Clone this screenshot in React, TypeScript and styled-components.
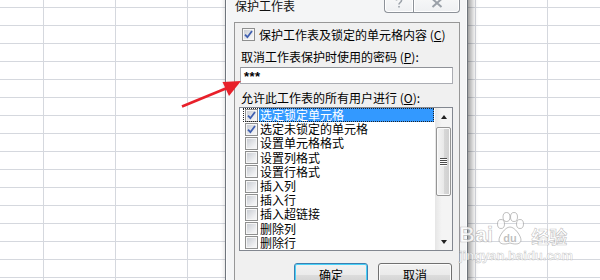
import React from 'react';
import styled, { createGlobalStyle } from 'styled-components';

const CJK = '"Noto Sans CJK SC", "Noto Sans", sans-serif';

const GlobalStyle = createGlobalStyle`
  html, body {
    margin: 0;
    padding: 0;
    overflow: hidden;
    background: #fff;
  }
  body {
    font-family: ${CJK};
  }
`;

const Sheet = styled.div`
  position: relative;
  width: 600px;
  height: 280px;
  overflow: hidden;
  box-sizing: border-box;
  display: flex;
  align-items: flex-start;
  padding-left: 225px;
  background-color: #fff;
  background-image:
    linear-gradient(to right, #d5d8de 1px, transparent 1px),
    linear-gradient(to bottom, #d5d8de 1px, transparent 1px);
  background-size: 72px 100%, 100% 18px;
  background-position: 43px 0, 0 7px;
`;

const Window = styled.div`
  width: 243px;
  height: 330px;
  margin-top: -10px;
  flex-shrink: 0;
  box-sizing: border-box;
  display: flex;
  flex-direction: column;
  padding: 0 7px 0 8px;
  border: 1px solid #6f757c;
  border-radius: 6px 6px 0 0;
  background: #f4f5f6;
  box-shadow: 3px 0 7px rgba(0, 0, 0, 0.45), inset 0 0 0 1px #fdfdfd;
`;

const TitleBar = styled.div`
  height: 31px;
  display: flex;
  align-items: flex-start;
`;

const Title = styled.div`
  margin: 8px 0 0 1px;
  font-size: 12px;
  line-height: 13px;
  color: #111;
`;

const Captions = styled.div`
  margin-left: auto;
  display: flex;
`;

const CaptionButton = styled.div<{ $w: number }>`
  width: ${(p) => p.$w}px;
  height: 22px;
  box-sizing: border-box;
  display: flex;
  align-items: flex-end;
  justify-content: center;
  padding-bottom: 4px;
  border: 1px solid #8d9299;
  border-top: none;
  background: linear-gradient(#fbfbfb, #eef0f2);
  box-shadow: inset 0 0 0 1px #fff;
  &:first-child {
    border-radius: 0 0 0 4px;
    border-right: none;
  }
  &:last-child {
    border-radius: 0 0 4px 0;
  }
`;

const Client = styled.div`
  flex: 1;
  display: flex;
  flex-direction: column;
  border: 1px solid #979797;
  background: #f0f0f0;
  font-size: 12px;
  line-height: 14px;
  color: #000;
`;

const CheckRow = styled.label`
  margin: 5px 0 0 7px;
  height: 13px;
  display: flex;
  align-items: center;
  gap: 4px;
  white-space: nowrap;
`;

const Box = styled.span`
  width: 13px;
  height: 13px;
  flex-shrink: 0;
  box-sizing: border-box;
  display: flex;
  align-items: center;
  justify-content: center;
  border: 1px solid #8e8f8f;
  background: linear-gradient(135deg, #c4c8cf, #eeeff1 70%, #fafafa);
  box-shadow: inset 0 0 0 1px #f6f6f6;
`;

const FieldLabel = styled.div<{ $top: number }>`
  margin: ${(p) => p.$top}px 0 0 6px;
  white-space: nowrap;
`;

const Password = styled.div`
  margin: 3px 0 0 5px;
  width: 213px;
  height: 17px;
  box-sizing: border-box;
  border: 1px solid #abadb3;
  border-top-color: #8f9298;
  background: #fff;
  padding-left: 3px;
  font-family: "Liberation Sans", Arial, sans-serif;
  font-size: 13px;
  font-weight: bold;
  line-height: 17px;
  letter-spacing: 0.5px;
`;

const ListBox = styled.div`
  margin: 2px 0 0 4px;
  width: 214px;
  height: 144px;
  box-sizing: border-box;
  border: 1px solid #828790;
  background: #fff;
  display: flex;
`;

const Items = styled.div`
  flex: 1;
  display: flex;
  flex-direction: column;
`;

const Item = styled.div<{ $focused?: boolean }>`
  position: relative;
  height: 14.2px;
  display: flex;
  align-items: center;
  padding-left: 5px;
  &::before {
    content: '';
    display: ${(p) => (p.$focused ? 'block' : 'none')};
    position: absolute;
    left: 3px;
    top: 0;
    right: 1px;
    bottom: 0;
    border: 1px dotted #222;
  }
`;

const ItemText = styled.span<{ $selected?: boolean }>`
  flex: 1;
  margin: 0 1px 0 1px;
  padding-left: 1px;
  height: 14px;
  line-height: 14px;
  white-space: nowrap;
  background: ${(p) => (p.$selected ? '#3399ff' : 'transparent')};
  color: ${(p) => (p.$selected ? '#fff' : '#000')};
`;

const ScrollBar = styled.div`
  width: 17px;
  display: flex;
  flex-direction: column;
  background: linear-gradient(to right, #e6e6e6, #f4f4f4 40%, #f4f4f4);
`;

const Arrow = styled.div<{ $down?: boolean }>`
  height: 17px;
  display: flex;
  align-items: center;
  justify-content: center;
  &::after {
    content: '';
    width: 0;
    height: 0;
    border-left: 3.5px solid transparent;
    border-right: 3.5px solid transparent;
    ${(p) =>
      p.$down ? 'border-top: 4px solid #222;' : 'border-bottom: 4px solid #222;'}
  }
`;

const Thumb = styled.div`
  margin: 2px 1px 0 1px;
  height: 69px;
  box-sizing: border-box;
  border: 1px solid #959595;
  border-radius: 2px;
  background: linear-gradient(to right, #f4f4f4, #e9e9e9 50%, #d8d8d8 51%, #cfcfcf);
  box-shadow: inset 0 0 0 1px #fbfbfb;
  display: flex;
  flex-direction: column;
  align-items: center;
  justify-content: center;
  gap: 1px;
`;

const Grip = styled.span`
  width: 7px;
  height: 1px;
  background: #4d4d4d;
  box-shadow: 0 1px 0 #fff;
`;

const Spacer = styled.div`
  flex: 1;
`;

const Buttons = styled.div`
  margin-top: 12px;
  padding-right: 7px;
  display: flex;
  justify-content: flex-end;
  gap: 10px;
`;

const DialogButton = styled.div<{ $primary?: boolean }>`
  width: 74px;
  height: 23px;
  box-sizing: border-box;
  display: flex;
  align-items: center;
  justify-content: center;
  border-radius: 3px;
  border: 1px solid ${(p) => (p.$primary ? '#3c7fb1' : '#707070')};
  background: linear-gradient(#f2f2f2, #ebebeb 50%, #dddddd 51%, #cfcfcf);
  box-shadow: inset 0 0 0 1px ${(p) => (p.$primary ? '#48d0f8' : '#fcfcfc')};
  font-size: 12px;
`;

const Overlay = styled.svg`
  position: absolute;
  left: 0;
  top: 0;
  pointer-events: none;
`;

const Watermark = styled.div`
  position: absolute;
  left: 459px;
  top: 212px;
  display: flex;
  flex-direction: column;
  pointer-events: none;
`;

const MarkRow = styled.div`
  display: flex;
  align-items: flex-end;
  gap: 2px;
`;

const MarkBig = styled.span`
  font-family: "Liberation Sans", Arial, sans-serif;
  font-weight: bold;
  font-size: 22px;
  line-height: 22px;
  color: rgba(255, 255, 255, 0.75);
  -webkit-text-stroke: 0.7px rgba(140, 140, 140, 0.55);
`;

const MarkCjk = styled.span`
  font-family: ${CJK};
  font-weight: bold;
  font-size: 18px;
  line-height: 20px;
  margin-left: 4px;
  color: rgba(255, 255, 255, 0.75);
  -webkit-text-stroke: 0.6px rgba(140, 140, 140, 0.55);
`;

const MarkUrl = styled.span`
  font-family: "Liberation Sans", Arial, sans-serif;
  font-weight: bold;
  font-size: 13px;
  line-height: 15px;
  margin-top: 2px;
  color: rgba(255, 255, 255, 0.75);
  -webkit-text-stroke: 0.5px rgba(140, 140, 140, 0.5);
`;

const Check = () => (
  <svg width="9" height="9" viewBox="0 0 9 9">
    <path d="M1 4.6 L3.4 7.2 L8 1" fill="none" stroke="#3f5fb0" strokeWidth="1.8" />
  </svg>
);

const CheckBox = ({ checked }: { checked?: boolean }) => <Box>{checked ? <Check /> : null}</Box>;

const Paw = () => (
  <svg width="30" height="34" viewBox="0 0 30 34">
    <g fill="rgba(255,255,255,0.75)" stroke="rgba(140,140,140,0.55)" strokeWidth="1">
      <ellipse cx="6" cy="12" rx="3.5" ry="4.5" />
      <ellipse cx="11.5" cy="5" rx="3.5" ry="4.5" />
      <ellipse cx="19" cy="5" rx="3.5" ry="4.5" />
      <ellipse cx="25" cy="12" rx="3.5" ry="4.5" />
      <path d="M15 15 C10 15 4 24 4 28 C4 32 9 33 15 31 C21 33 26 32 26 28 C26 24 20 15 15 15 Z" />
    </g>
    <text x="15" y="30" textAnchor="middle" fontFamily="Liberation Sans, Arial, sans-serif" fontWeight="bold" fontSize="11" fill="rgba(150,150,150,0.6)">du</text>
  </svg>
);

const permissions: { label: string; checked: boolean }[] = [
  { label: '选定锁定单元格', checked: true },
  { label: '选定未锁定的单元格', checked: true },
  { label: '设置单元格格式', checked: false },
  { label: '设置列格式', checked: false },
  { label: '设置行格式', checked: false },
  { label: '插入列', checked: false },
  { label: '插入行', checked: false },
  { label: '插入超链接', checked: false },
  { label: '删除列', checked: false },
  { label: '删除行', checked: false },
];

export default function App() {
  return (
    <>
      <GlobalStyle />
      <Sheet>
        <Window>
          <TitleBar>
            <Title>保护工作表</Title>
            <Captions>
              <CaptionButton $w={29}>
                <svg width="8" height="11" viewBox="0 0 8 11">
                  <path d="M1.5 3.5 C1.5 0.5 6.5 0.5 6.5 3.5 C6.5 5.5 4 5.5 4 7.5 M4 9 V10.5" fill="none" stroke="#9aa0a8" strokeWidth="1.6" />
                </svg>
              </CaptionButton>
              <CaptionButton $w={47}>
                <svg width="12" height="10" viewBox="0 0 12 10">
                  <path d="M1.5 1 L10.5 9 M10.5 1 L1.5 9" fill="none" stroke="#9aa0a8" strokeWidth="2" />
                </svg>
              </CaptionButton>
            </Captions>
          </TitleBar>
          <Client>
            <CheckRow>
              <CheckBox checked />
              <span>
                保护工作表及锁定的单元格内容 (<u>C</u>)
              </span>
            </CheckRow>
            <FieldLabel $top={9}>
              取消工作表保护时使用的密码 (<u>P</u>):
            </FieldLabel>
            <Password>***</Password>
            <FieldLabel $top={7}>
              允许此工作表的所有用户进行 (<u>O</u>):
            </FieldLabel>
            <ListBox>
              <Items>
                {permissions.map((p, i) => (
                  <Item key={p.label} $focused={i === 0}>
                    <CheckBox checked={p.checked} />
                    <ItemText $selected={i === 0}>{p.label}</ItemText>
                  </Item>
                ))}
              </Items>
              <ScrollBar>
                <Arrow />
                <Thumb>
                  <Grip />
                  <Grip />
                  <Grip />
                  <Grip />
                </Thumb>
                <Spacer />
                <Arrow $down />
              </ScrollBar>
            </ListBox>
            <Buttons>
              <DialogButton $primary>确定</DialogButton>
              <DialogButton>取消</DialogButton>
            </Buttons>
          </Client>
        </Window>
        <Watermark>
          <MarkRow>
            <MarkBig>Bai</MarkBig>
            <Paw />
            <MarkCjk>经验</MarkCjk>
          </MarkRow>
          <MarkUrl>jingyan.baidu.com</MarkUrl>
        </Watermark>
        <Overlay width="600" height="280" viewBox="0 0 600 280">
          <line x1="182" y1="106.5" x2="227" y2="88" stroke="#e8202a" strokeWidth="2.6" />
          <polygon points="241,81 222.5,82 229,96" fill="#e8202a" />
        </Overlay>
      </Sheet>
    </>
  );
}
